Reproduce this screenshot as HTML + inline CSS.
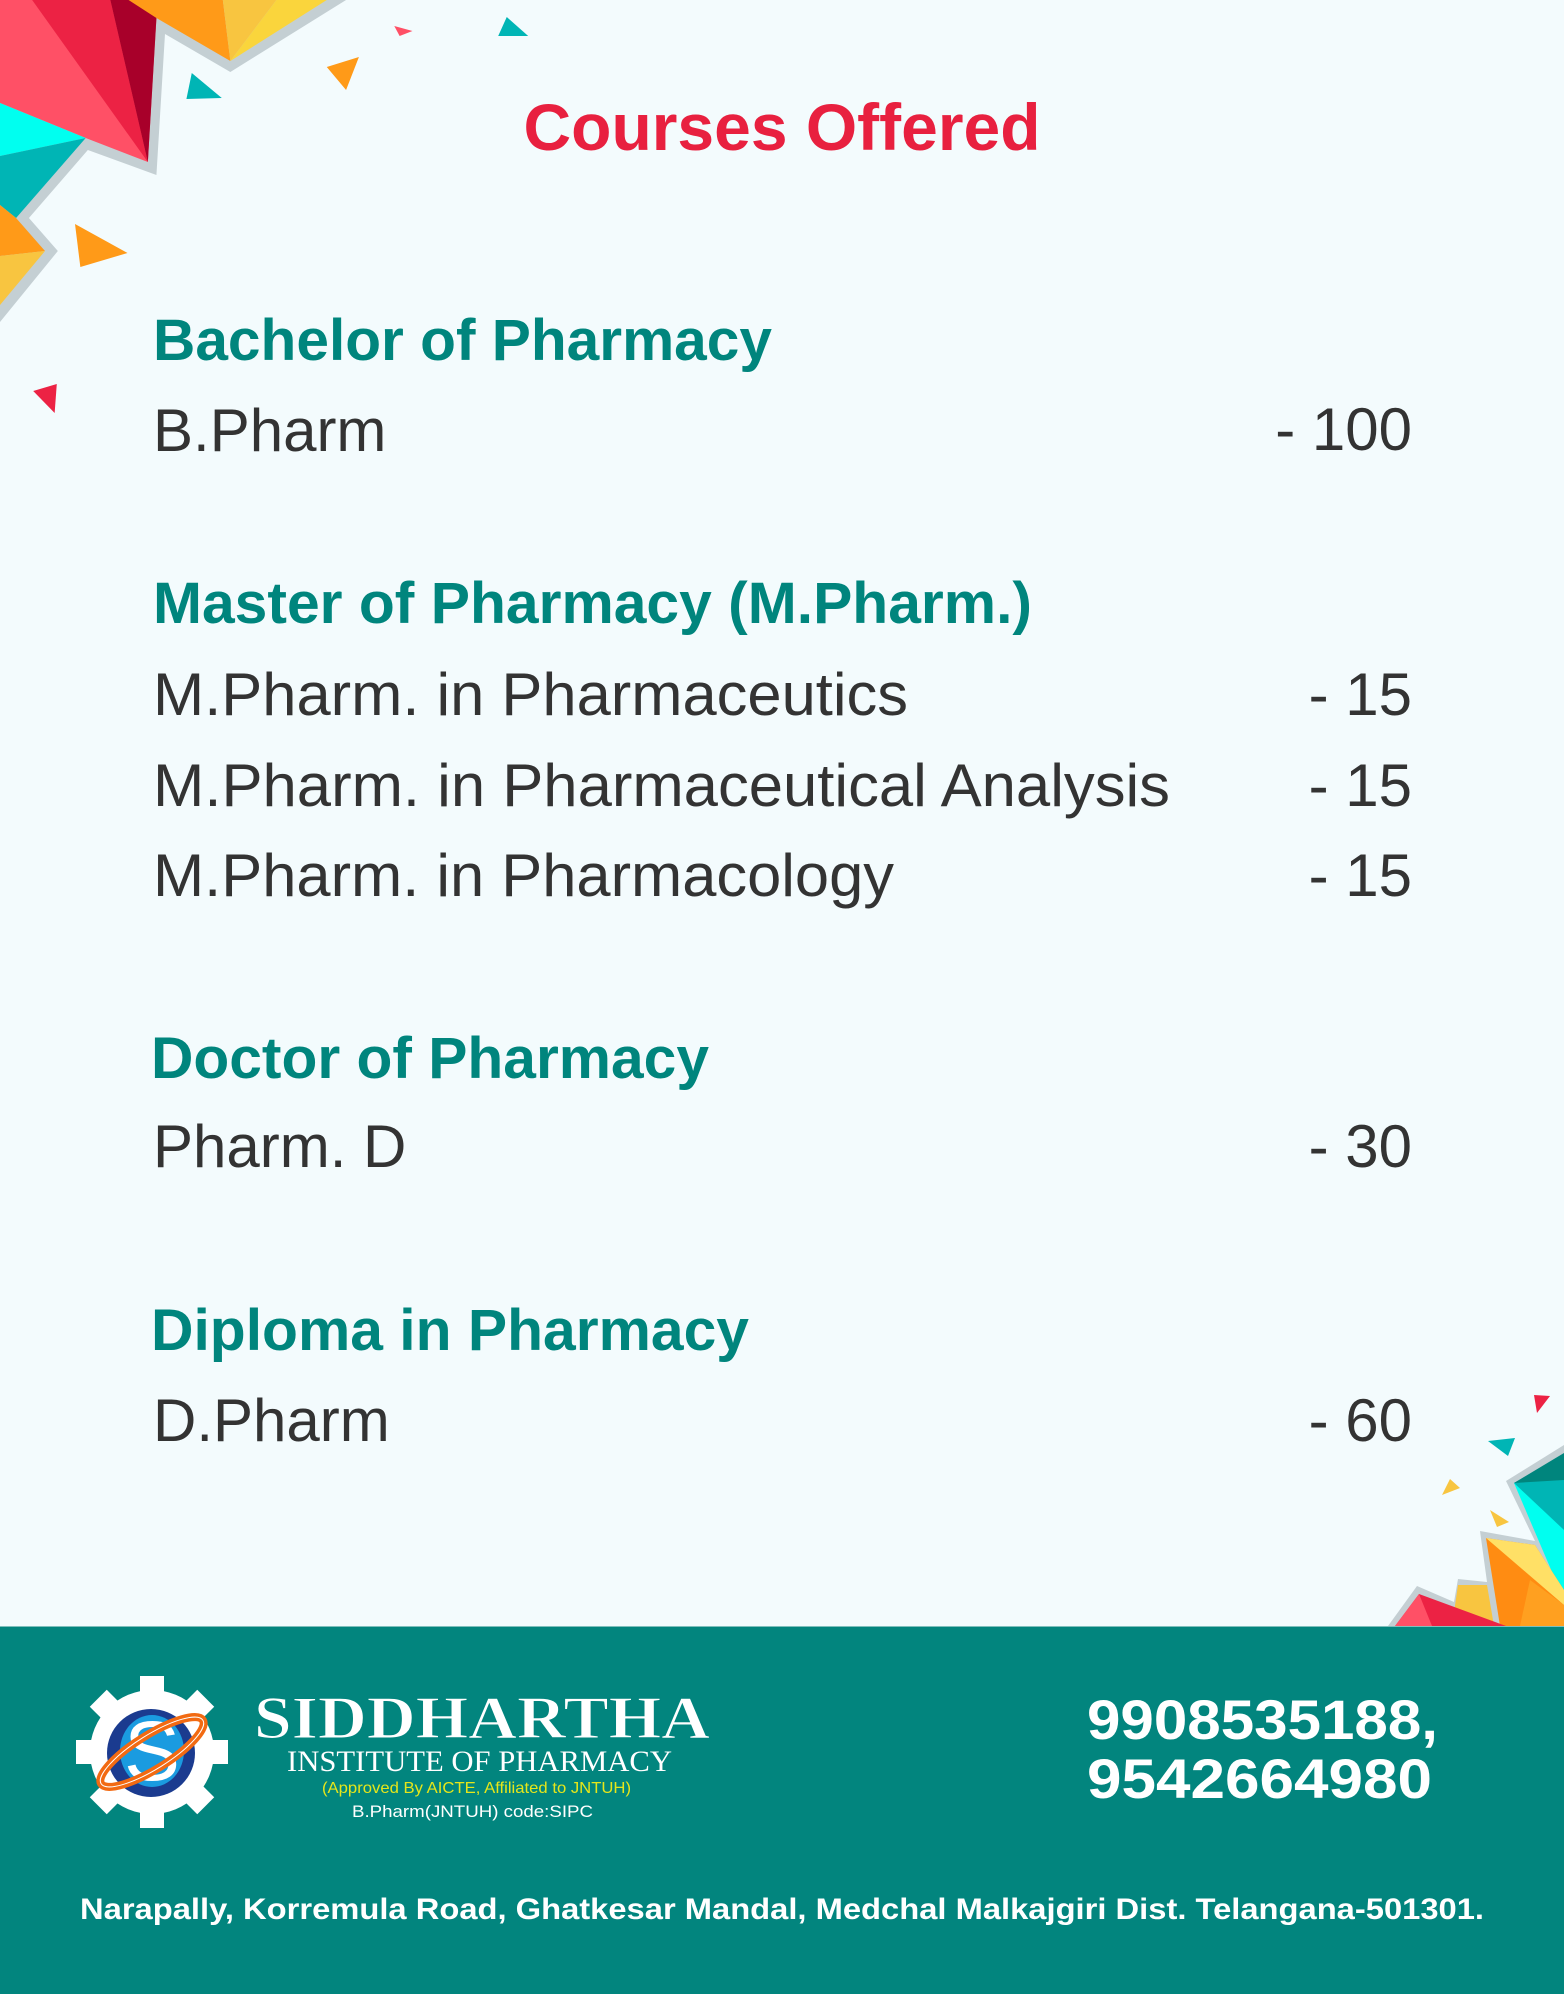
<!DOCTYPE html>
<html><head><meta charset="utf-8"><style>
html,body{margin:0;padding:0;background:#f3fbfd;}
svg{display:block}
</style></head><body>
<svg width="1564" height="1994" viewBox="0 0 1564 1994" xmlns="http://www.w3.org/2000/svg">
<rect width="1564" height="1994" fill="#f3fbfd"/>
<!-- top-left decoration -->
<g transform="scale(1.0714,1)">
<polygon points="0,0 323,0 215,72 154,34 146,175 82,150 27,218 54,251 0,322" fill="#c4cfd3"/>
<polygon points="0,0 120,0 146,18 138,162 80,138 0,103" fill="#ff5066"/>
<polygon points="30,0 103,0 138,162" fill="#ec2244"/>
<polygon points="103,0 146,0 146,18 138,162" fill="#a8002a"/>
<polygon points="120,0 208,0 215,61 146,18" fill="#ff9a18"/>
<polygon points="208,0 258,0 215,61" fill="#f8c540"/>
<polygon points="258,0 305,0 215,61" fill="#fad53c"/>
<polygon points="0,103 80,138 0,156" fill="#00fff0"/>
<polygon points="0,156 80,138 15,218 0,205" fill="#00b5b5"/>
<polygon points="0,205 15,218 42,251 0,256" fill="#ff9a18"/>
<polygon points="0,256 42,251 0,305" fill="#f8c540"/>
<polygon points="179,73 207,98 174,99" fill="#00b5b5"/>
<polygon points="305,67 335,57 323,90" fill="#ff9a18"/>
<polygon points="368,26 385,31 373,36" fill="#ff5066"/>
<polygon points="473,17 493,36 465,36" fill="#00b5b5"/>
<polygon points="70,224 119,253 75,267" fill="#ff9a18"/>
<polygon points="31,391 53,384 51,413" fill="#ec2244"/>
</g>
<!-- bottom-right decoration -->
<polygon points="1388,1626 1417,1586 1454,1602 1458,1579 1487,1582 1480,1531 1535,1541 1506,1481 1564,1445 1564,1626" fill="#c4cfd3"/>
<polygon points="1514,1483 1564,1455 1564,1600" fill="#00fff0"/>
<polygon points="1514,1483 1564,1455 1564,1530" fill="#00b5b5"/>
<polygon points="1514,1483 1564,1453 1564,1480" fill="#00857d"/>
<polygon points="1486,1538 1535,1545 1564,1590 1564,1626 1500,1626" fill="#ff8c12"/>
<polygon points="1486,1538 1535,1545 1564,1590 1564,1605" fill="#ffe066"/>
<polygon points="1530,1580 1564,1605 1564,1626 1520,1626" fill="#ffa020"/>
<polygon points="1458,1585 1487,1585 1494,1626 1452,1626" fill="#f8c540"/>
<polygon points="1419,1594 1506,1626 1395,1626" fill="#ec2244"/>
<polygon points="1419,1594 1432,1626 1395,1626" fill="#ff5066"/>
<polygon points="1534,1395 1550,1396 1537,1413" fill="#ec2244"/>
<polygon points="1488,1441 1515,1438 1508,1456" fill="#00b5b5"/>
<polygon points="1450,1479 1460,1488 1442,1495" fill="#f8c540"/>
<polygon points="1490,1510 1509,1522 1497,1527" fill="#f8c540"/>

<!-- title -->
<text x="782" y="150" text-anchor="middle" font-family="Liberation Sans, sans-serif" font-weight="bold" font-size="66" fill="#e8203f" textLength="517" lengthAdjust="spacingAndGlyphs">Courses Offered</text>

<g font-family="Liberation Sans, sans-serif" font-weight="bold" font-size="58" fill="#00857d">
<text x="153" y="360" textLength="619" lengthAdjust="spacingAndGlyphs">Bachelor of Pharmacy</text>
<text x="153" y="623" textLength="879" lengthAdjust="spacingAndGlyphs">Master of Pharmacy (M.Pharm.)</text>
<text x="151" y="1078" textLength="558" lengthAdjust="spacingAndGlyphs">Doctor of Pharmacy</text>
<text x="151" y="1350" textLength="598" lengthAdjust="spacingAndGlyphs">Diploma in Pharmacy</text>
</g>
<g font-family="Liberation Sans, sans-serif" font-size="60" fill="#333333">
<text x="153" y="451">B.Pharm</text>
<text x="153" y="715" textLength="755" lengthAdjust="spacingAndGlyphs">M.Pharm. in Pharmaceutics</text>
<text x="153" y="806" textLength="1017" lengthAdjust="spacingAndGlyphs">M.Pharm. in Pharmaceutical Analysis</text>
<text x="153" y="896" textLength="741" lengthAdjust="spacingAndGlyphs">M.Pharm. in Pharmacology</text>
<text x="153" y="1167">Pharm. D</text>
<text x="153" y="1441">D.Pharm</text>
</g>
<g font-family="Liberation Sans, sans-serif" font-size="60" fill="#333333" text-anchor="end">
<text x="1412" y="450">- 100</text>
<text x="1412" y="715">- 15</text>
<text x="1412" y="806">- 15</text>
<text x="1412" y="896">- 15</text>
<text x="1412" y="1167">- 30</text>
<text x="1412" y="1441">- 60</text>
</g>

<!-- footer -->
<rect x="0" y="1626" width="1564" height="368" fill="#02857e"/>
<line x1="0" y1="1626.5" x2="1564" y2="1626.5" stroke="#7fbfbc" stroke-width="1"/>
<!-- gear logo -->
<g transform="translate(152,1752)">
  <g fill="#ffffff">
    <circle r="62"/>
    <g id="t"><rect x="-12" y="-76" width="24" height="22"/></g>
    <use href="#t" transform="rotate(45)"/>
    <use href="#t" transform="rotate(90)"/>
    <use href="#t" transform="rotate(135)"/>
    <use href="#t" transform="rotate(180)"/>
    <use href="#t" transform="rotate(225)"/>
    <use href="#t" transform="rotate(270)"/>
    <use href="#t" transform="rotate(315)"/>
  </g>
  <ellipse cx="-1" cy="1" rx="44" ry="44" fill="#1b3b8f"/>
  <ellipse cx="0" cy="-1" rx="32" ry="36" fill="#1a9be0"/>
  <text x="0" y="28" text-anchor="middle" font-family="Liberation Sans, sans-serif" font-size="84" fill="#ffffff">S</text>
  <ellipse cx="0" cy="0" rx="60" ry="17" fill="none" stroke="#f26a12" stroke-width="8" transform="rotate(-32)"/>
  <ellipse cx="0" cy="0" rx="60" ry="17" fill="none" stroke="#ffffff" stroke-width="1" transform="rotate(-32)"/>
</g>
<text x="254" y="1738" font-family="Liberation Serif, serif" font-weight="bold" font-size="60" fill="#ffffff" stroke="#02857e" stroke-width="1" textLength="456" lengthAdjust="spacingAndGlyphs">SIDDHARTHA</text>
<text x="287" y="1771" font-family="Liberation Serif, serif" font-size="30" fill="#ffffff" textLength="385" lengthAdjust="spacingAndGlyphs">INSTITUTE OF PHARMACY</text>
<text x="322" y="1793" font-family="Liberation Sans, sans-serif" font-size="16" fill="#e6e61a" textLength="309" lengthAdjust="spacingAndGlyphs">(Approved By AICTE, Affiliated to JNTUH)</text>
<text x="352" y="1817" font-family="Liberation Sans, sans-serif" font-size="17" fill="#ffffff" textLength="241" lengthAdjust="spacingAndGlyphs">B.Pharm(JNTUH) code:SIPC</text>

<text x="1087" y="1739" font-family="Liberation Sans, sans-serif" font-weight="bold" font-size="56" fill="#ffffff" textLength="351" lengthAdjust="spacingAndGlyphs">9908535188,</text>
<text x="1087" y="1798" font-family="Liberation Sans, sans-serif" font-weight="bold" font-size="56" fill="#ffffff" textLength="345" lengthAdjust="spacingAndGlyphs">9542664980</text>

<text x="80" y="1919" font-family="Liberation Sans, sans-serif" font-weight="bold" font-size="30" fill="#ffffff" textLength="1404" lengthAdjust="spacingAndGlyphs">Narapally, Korremula Road, Ghatkesar Mandal, Medchal Malkajgiri Dist. Telangana-501301.</text>
</svg>
</body></html>
